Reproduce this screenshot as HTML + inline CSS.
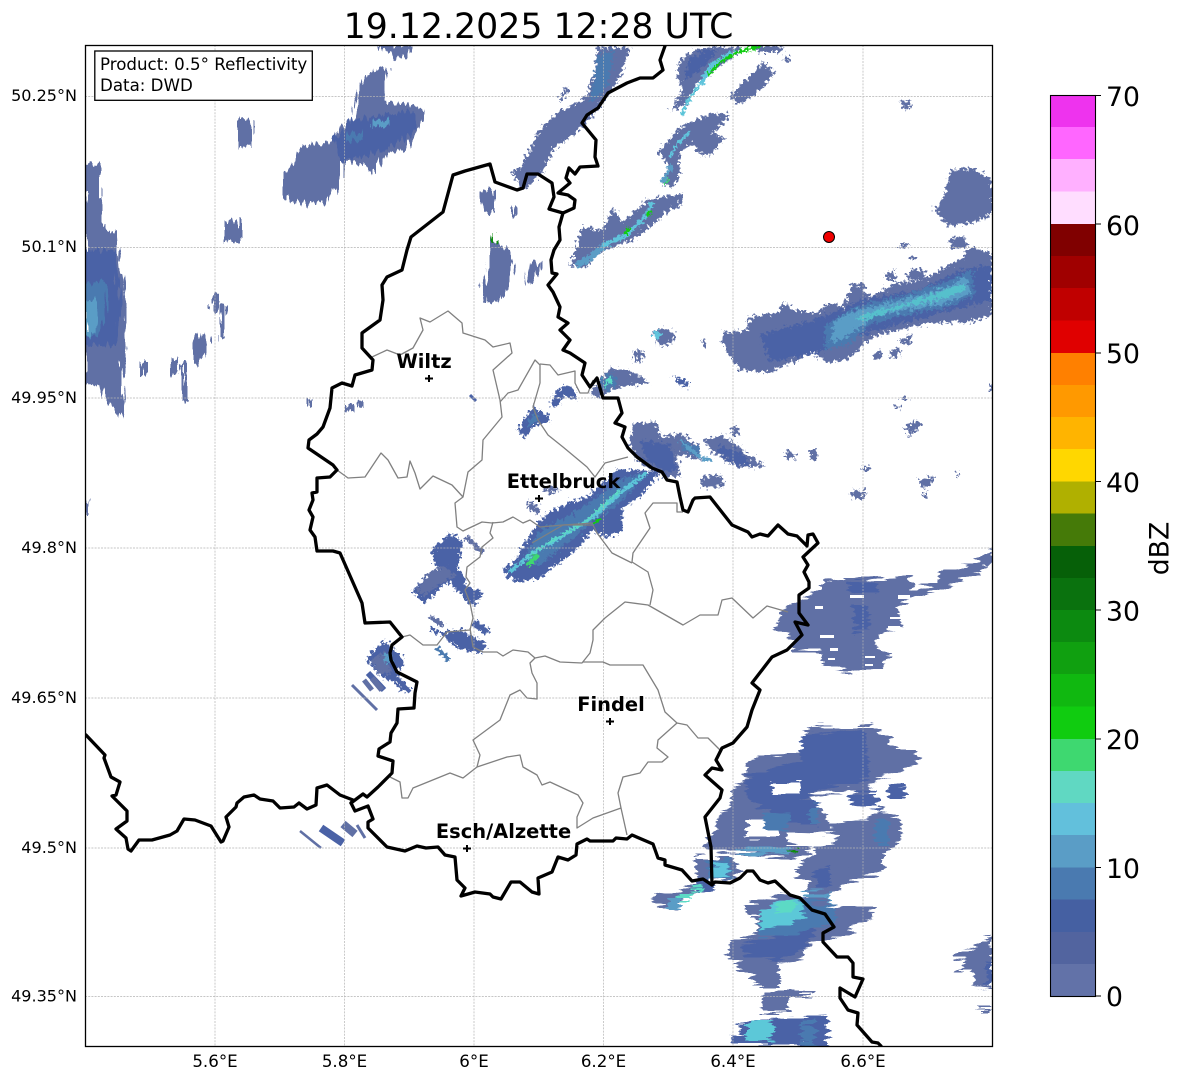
<!DOCTYPE html>
<html><head><meta charset="utf-8"><title>Radar</title>
<style>
html,body{margin:0;padding:0;background:#fff}
svg{display:block}
text{font-family:"DejaVu Sans","Liberation Sans",sans-serif;fill:#000}
.L{fill:#6070a5}.D{fill:#4a62a6}.M{fill:#4a7ab0}.S{fill:#5a9dc6}.C{fill:#60c4dc}.T{fill:#5cdac5}.G{fill:#3ed870}
.t{font-size:16.67px}.y{font-size:16.05px}.n{font-size:26.67px}.b{font-size:19.44px;font-weight:bold;text-anchor:middle}
.ls line,.ls polyline{fill:none;stroke-linecap:butt}
</style></head><body>
<svg width="1184" height="1081" viewBox="0 0 1184 1081">
<defs>
<clipPath id="ax"><rect x="85" y="45" width="907.5" height="1001"/></clipPath>
<filter id="f1" x="-5%" y="-5%" width="110%" height="110%" color-interpolation-filters="sRGB"><feTurbulence type="fractalNoise" baseFrequency="0.3" numOctaves="3" seed="4"/><feDisplacementMap in="SourceGraphic" scale="12" xChannelSelector="R" yChannelSelector="G"/></filter>
<filter id="f2" x="-5%" y="-5%" width="110%" height="110%" color-interpolation-filters="sRGB"><feTurbulence type="fractalNoise" baseFrequency="0.03 0.3" numOctaves="2" seed="7"/><feDisplacementMap in="SourceGraphic" scale="16" xChannelSelector="R" yChannelSelector="G"/></filter>
<filter id="f3" x="-5%" y="-5%" width="110%" height="110%" color-interpolation-filters="sRGB"><feTurbulence type="fractalNoise" baseFrequency="0.3 0.04" numOctaves="2" seed="3"/><feDisplacementMap in="SourceGraphic" scale="15" xChannelSelector="R" yChannelSelector="G"/></filter>
<filter id="f4" x="-5%" y="-5%" width="110%" height="110%" color-interpolation-filters="sRGB"><feTurbulence type="fractalNoise" baseFrequency="0.35" numOctaves="2" seed="9"/><feDisplacementMap in="SourceGraphic" scale="8" xChannelSelector="R" yChannelSelector="G"/></filter>
</defs>
<rect width="1184" height="1081" fill="#fff"/>

<g clip-path="url(#ax)">
<!-- vertical-streak radar (west) -->
<g filter="url(#f3)">
<polygon class="L" points="285,173 302,147 335,142 340,127 357,118 355,97 362,80 378,67 387,70 385,103 407,103 425,108 418,133 405,150 385,153 375,173 362,163 342,163 338,187 325,203 305,203 285,200"/>
<polygon class="D" points="335,140 352,120 412,110 418,130 385,150 342,163"/>
<rect class="M" x="347" y="132" width="15" height="8"/><rect class="S" x="372" y="120" width="18" height="7"/>
<polygon class="L" points="375,45 412,45 408,55 395,60 388,52"/>
<rect class="L" x="238" y="120" width="14" height="27"/><rect class="L" x="225" y="220" width="15" height="21"/>
<polygon class="L" points="85,165 100,165 100,200 103,205 103,230 118,230 120,260 125,300 127,345 122,365 125,400 123,420 110,405 100,385 85,388"/>
<polygon class="D" points="85,250 115,250 120,300 115,345 85,345"/>
<polygon class="M" points="85,285 105,280 108,312 98,335 85,335"/>
<polygon class="S" points="85,300 98,300 97,332 85,335"/>
<rect class="L" x="212" y="295" width="6" height="18"/><rect class="L" x="220" y="305" width="5" height="32"/>
<polygon class="L" points="192,343 205,330 210,345 200,365 194,365"/>
<rect class="L" x="172" y="358" width="7" height="16"/><rect class="L" x="182" y="365" width="6" height="36"/><rect class="L" x="142" y="362" width="6" height="13"/>
<rect class="L" x="85" y="500" width="5" height="12"/>
<rect class="L" x="307" y="399" width="4" height="9"/><rect class="L" x="347" y="405" width="6" height="8"/><rect class="L" x="358" y="401" width="5" height="8"/>
<polygon class="L" points="480,190 495,190 495,212 482,212"/><rect class="L" x="512" y="205" width="4" height="10"/>
<polygon class="L" points="492,240 510,250 514,262 510,280 505,295 497,302 486,302 482,285 490,268"/>
<rect fill="#108a10" x="494" y="232" width="2" height="12"/>
<polygon class="L" points="527,280 530,265 540,262 538,272 531,283"/>
</g>

<!-- rough radar (north-east and centre) -->
<g filter="url(#f1)">
<polygon class="L" points="597,47 630,47 620,77 610,93 587,123 570,137 553,150 543,173 523,190 512,173 523,165 537,133 557,113 587,97 595,70"/>
<polygon class="M" points="598,55 615,50 608,85 595,100 590,100"/>
<polygon class="L" points="558,100 566,87 569,90 561,102"/>
<polygon class="L" points="680,60 700,47 743,47 720,67 697,83 687,103 670,112 683,90 677,77"/>
<polygon class="D" points="688,60 705,50 718,50 700,70 685,80"/>
<polygon class="L" points="729,97 743,83 763,63 775,73 760,90 740,105"/>
<polygon class="L" points="753,46 785,46 782,52 757,52"/>
<polygon class="L" points="783,57 790,57 790,61 783,61"/>
<polygon class="L" points="658,152 680,127 710,113 730,115 713,133 725,138 710,157 697,152 693,143 680,153 680,173 673,188 662,185 670,167"/>
<polygon class="L" points="570,267 582,227 603,230 613,208 623,222 647,200 683,193 680,205 667,212 650,227 633,240 597,253 587,267"/>
<polygon class="L" points="950,170 972,168 992,180 992,215 965,225 948,225 935,212 945,195"/>
<polygon class="L" points="934,205 944,207 946,215 938,215"/>
<polygon class="L" points="950,238 965,236 967,248 952,249"/>
<polygon class="L" points="723,333 747,330 750,317 780,313 782,302 793,310 817,313 830,303 843,307 853,283 870,297 897,283 923,280 960,260 970,247 992,253 992,315 970,322 930,323 897,330 873,337 847,360 827,363 813,353 790,363 770,373 740,370 730,357 722,343"/>
<polygon class="D" points="760,335 820,318 860,300 920,290 960,270 992,265 992,300 920,318 860,335 820,352 770,362"/>
<polygon class="M" points="825,325 860,305 905,295 950,280 972,270 975,295 945,308 900,316 870,325 848,345 825,350"/>
<polygon class="S" points="835,320 857,310 900,300 947,287 967,277 970,293 947,303 907,310 873,317 847,337 830,343"/>
<polygon fill="#56c0cc" points="855,317 900,305 950,288 965,283 965,290 945,298 900,308 862,322"/>
<polygon class="L" points="652,333 662,327 675,333 672,342 660,347"/><polygon class="C" points="653,333 660,330 660,338 654,338"/>
<polygon class="L" points="901,102 911,100 910,110 903,108"/>
<polygon class="L" points="872,355 880,350 882,358 875,360"/><polygon class="L" points="890,350 900,348 898,358 890,356"/>
<polygon class="L" points="900,340 910,335 912,342 902,345"/><polygon class="L" points="855,290 862,282 866,288 858,296"/>
<polygon class="L" points="905,275 915,268 925,272 925,280 910,280"/><polygon class="L" points="885,275 895,270 895,280 885,280"/>
<polygon class="L" points="900,243 907,243 907,247 900,247"/><polygon class="L" points="910,255 915,255 915,260 910,260"/>
<polygon class="L" points="703,340 707,341 706,346 702,345"/>
<!-- centre -->
<polygon class="L" points="633,423 657,423 660,437 680,433 700,447 700,460 677,453 680,477 663,477 640,463 630,447"/>
<polygon class="D" points="640,440 670,445 678,470 665,472 645,458"/>
<polygon class="M" points="680,440 700,448 700,458 682,450"/>
<polygon class="L" points="703,440 723,435 760,463 767,467 737,467 713,452"/>
<polygon class="D" points="720,445 740,452 752,466 735,465 718,452"/>
<polygon class="L" points="600,380 610,368 633,372 650,383 620,387 607,393 597,398 590,393"/>
<polygon class="M" points="600,382 612,372 618,382 607,392"/>
<polygon class="T" points="606,378 612,376 610,386 605,386"/>
<polygon class="L" points="633,352 642,350 643,362 636,363"/>
<polygon class="D" points="672,375 680,378 690,384 688,389 680,385"/>
<polygon class="D" points="550,405 555,392 565,385 575,388 577,400 565,395 555,408"/>
<polygon class="D" points="517,430 533,407 550,417 550,422 535,425 525,438"/><polygon class="M" points="527,422 535,412 540,418 530,428"/>
<polygon class="D" points="503,567 513,563 533,530 547,513 567,503 587,497 617,470 643,470 660,473 640,497 623,507 622,530 607,538 593,530 573,553 553,567 543,577 520,582 507,577"/>
<polygon class="M" points="524,560 540,530 570,515 600,495 625,478 645,474 625,498 595,520 565,545 540,565"/>
<polygon class="L" points="527,503 533,502 541,510 537,514 529,510"/>
<polygon class="L" points="543,490 552,486 560,490 550,494"/>
<polygon class="D" points="433,548 450,533 463,542 457,567 465,578 467,587 485,593 472,607 460,593 447,582 425,603 412,592 425,578 440,570 433,560"/>
<polygon class="L" points="430,572 445,566 455,575 440,585 425,595 415,592"/>
<polygon class="D" points="438,632 463,630 487,645 482,653 457,648 447,640"/>
<polygon class="L" points="703,476 715,475 725,483 712,487 703,483"/>
<polygon class="D" points="366,658 385,640 400,655 405,664 396,672 410,690 405,692 393,682 380,677"/>
<polygon class="L" points="370,660 385,652 392,672 380,675"/>
<polygon class="S" points="384,655 390,652 392,662 385,662"/>
<polygon class="L" points="730,428 738,426 740,435 731,435"/>
<polygon class="L" points="783,452 790,450 797,460 788,458"/>
<polygon class="L" points="810,450 818,450 817,460 810,460"/>
<polygon class="L" points="850,492 860,490 867,490 862,499 855,499"/>
<polygon class="L" points="918,480 935,476 930,487 922,488"/>
<polygon class="L" points="922,493 928,493 928,497 922,497"/>
<polygon class="L" points="905,428 915,420 923,424 918,428 909,437"/>
<polygon class="L" points="702,476 722,476 724,486 702,488"/>
<polygon class="L" points="893,405 900,405 898,410"/><polygon class="L" points="901,398 908,398 908,401 901,401"/>
<polygon class="L" points="955,473 959,472 958,477"/><polygon class="L" points="990,383 993,383 993,390 990,390"/>
<polygon class="L" points="860,467 870,467 870,470 860,470"/>
</g>

<!-- roughened strokes: cores -->
<g class="ls" fill="none" filter="url(#f4)">
<polyline stroke="#5cc4d8" stroke-width="4" points="510,572 533,553 560,537 593,517 620,493 647,473"/>
<polyline stroke="#5cdac5" stroke-width="2" points="528,557 550,542 585,522 620,490"/>
<polyline stroke="#3ed870" stroke-width="5" points="528,565 538,555"/>
<polyline stroke="#10cc10" stroke-width="3" points="594,524 600,518"/>
<polyline stroke="#5a9dc6" stroke-width="3" points="680,440 700,458 712,460"/>
<polyline stroke="#60c4dc" stroke-width="3" points="670,158 675,147 690,132"/>
<polyline stroke="#5a9dc6" stroke-width="4" points="662,183 672,165"/>
<polyline stroke="#3ed870" stroke-width="2" points="664,185 668,178"/>
<polyline stroke="#60c4dc" stroke-width="4" points="600,247 627,235 647,215 652,202"/>
<polyline stroke="#5a9dc6" stroke-width="6" points="577,265 590,258 603,247"/>
<polyline stroke="#10cc10" stroke-width="3" points="625,235 630,228"/><polyline stroke="#10cc10" stroke-width="3" points="647,216 651,210"/>
<polyline stroke="#5cc4d8" stroke-width="3" points="682,115 688,100 700,85"/>
<polyline stroke="#60c4dc" stroke-width="5" points="700,85 712,65 735,52"/>
<polyline stroke="#10cc10" stroke-width="3" points="708,75 720,62 738,52 762,46"/>
<polyline stroke="#6070a5" stroke-width="5" points="466,537 483,553"/>
<polyline stroke="#6070a5" stroke-width="5" points="430,617 443,625"/>
<polyline stroke="#4a62a6" stroke-width="4" points="430,628 438,633"/>
<polyline stroke="#4a62a6" stroke-width="7" points="473,622 488,632"/>
<polyline stroke="#4a7ab0" stroke-width="4" points="437,648 449,660"/>
</g>
<g class="ls" fill="none">
<polyline stroke="#4a62a6" stroke-width="6" points="368,673 384,690"/>
<polyline stroke="#6070a5" stroke-width="6" points="372,678 382,690"/>
<polyline stroke="#6070a5" stroke-width="3" points="352,685 377,710"/>
<polyline stroke="#6070a5" stroke-width="5" points="364,680 372,690"/>
<polyline stroke="#4a62a6" stroke-width="4" points="396,678 410,692"/>
<polyline stroke="#6070a5" stroke-width="2.5" points="300,831 321,848"/>
<polyline stroke="#4a62a6" stroke-width="8" points="321,828 343,843"/>
<polyline stroke="#6070a5" stroke-width="8" points="343,824 355,834"/>
<polyline stroke="#6070a5" stroke-width="3" points="357,825 365,838"/>
<polyline stroke="#6070a5" stroke-width="6" points="985,565 992,558"/>
<polyline stroke="#4a62a6" stroke-width="3" points="470,395 476,401"/>
</g>

<!-- horizontal-stripe radar (south-east) -->
<g filter="url(#f2)">
<polygon class="L" points="823,580 863,578 893,577 907,575 913,590 937,583 940,572 970,565 992,550 992,562 967,577 950,587 917,598 897,607 903,627 883,633 873,647 893,653 880,668 847,673 823,663 820,652 793,650 793,637 775,628 783,613 800,600 823,590"/>
<polygon class="D" points="848,583 875,580 878,592 850,592"/>
<polygon class="D" points="852,605 868,605 870,630 855,632"/>
<polygon class="L" points="803,733 813,727 870,725 890,737 890,747 918,750 916,762 900,772 867,785 880,808 900,817 902,840 883,853 883,870 852,883 830,893 807,893 807,880 797,877 797,870 807,858 818,848 790,860 753,853 733,853 702,847 713,833 717,817 730,807 733,788 745,782 747,762 773,753 803,752"/>
<polygon class="D" points="803,735 865,730 870,780 820,790 800,800 760,810 745,790 750,775 800,760"/>
<polygon class="D" points="770,800 820,800 815,825 770,820"/>
<rect fill="#fff" x="772" y="781" width="28" height="14"/>
<polygon fill="#fff" points="810,795 848,790 865,800 880,808 865,820 830,825 820,805"/>
<rect fill="#fff" x="747" y="821" width="31" height="16"/>
<polygon fill="#fff" points="787,833 840,835 840,848 815,848 800,845 787,843"/>
<polygon class="D" points="848,795 878,793 878,807 850,806"/>
<polygon class="D" points="888,786 905,783 907,797 888,797"/>
<polygon class="M" points="810,805 818,805 818,823 810,823"/><polygon class="M" points="875,817 888,817 888,843 875,843"/>
<polygon class="M" points="763,812 790,815 790,830 765,830"/>
<polygon class="L" points="850,830 870,825 872,862 845,866 815,870 812,855"/>
<polygon class="D" points="815,870 830,865 830,888 815,888"/>
<polygon class="S" points="737,848 790,847 790,854 737,852"/>
<rect fill="#108a10" x="787" y="849" width="10" height="3"/>
<polygon class="S" points="803,893 830,892 830,907 812,905"/>
<polygon class="L" points="747,903 783,895 803,897 828,897 828,907 840,907 875,908 875,918 853,922 853,930 840,937 817,942 803,950 803,960 778,963 778,987 753,987 752,973 740,967 728,957 730,942 757,933 757,917 747,917"/>
<polygon class="D" points="742,945 800,930 815,930 805,948 778,960 745,955"/>
<polygon class="M" points="760,915 800,900 835,905 835,925 790,935 758,935"/>
<polygon fill="#5cc8d8" points="760,912 775,903 800,898 805,915 790,925 760,930"/>
<polygon class="T" points="772,906 795,900 795,910 777,912"/>
<polygon class="L" points="763,992 815,992 815,997 790,997 790,1012 762,1012"/>
<polygon class="D" points="730,1045 733,1032 745,1022 775,1018 828,1016 828,1045"/>
<rect fill="#fff" x="732" y="1020" width="12" height="4"/><rect fill="#fff" x="733" y="1029" width="12" height="4"/>
<polygon fill="#5cc8d8" points="747,1022 773,1021 773,1040 747,1040"/>
<rect class="M" x="801" y="1022" width="14" height="22"/>
<polygon class="L" points="954,953 975,947 992,935 992,988 975,985 972,970 958,970 966,960 954,958"/>
<rect class="D" x="986" y="960" width="6" height="24"/>
<rect class="L" x="978" y="1007" width="14" height="3"/>
<polygon class="L" points="652,898 680,890 700,880 705,888 680,900 675,910 655,905"/>
<polygon class="D" points="695,882 710,875 713,890 698,893"/>
<polygon class="L" points="695,857 732,857 740,870 730,882 700,880 695,870"/>
<polygon class="M" points="708,860 730,858 731,880 708,880"/>
<polygon class="C" points="712,865 728,864 728,876 710,878"/>
<rect class="S" x="668" y="898" width="11" height="11"/><rect class="T" x="678" y="894" width="12" height="5"/><rect class="T" x="692" y="885" width="11" height="6"/>
</g>
<g>
<rect fill="#fff" x="850" y="595" width="14" height="3"/><rect fill="#fff" x="898" y="595" width="12" height="4"/><rect fill="#fff" x="815" y="606" width="8" height="3"/>
<rect fill="#fff" x="890" y="617" width="14" height="2"/><rect fill="#fff" x="888" y="626" width="12" height="2"/>
<rect fill="#fff" x="820" y="635" width="14" height="3"/><rect fill="#fff" x="830" y="648" width="8" height="3"/><rect fill="#fff" x="828" y="658" width="7" height="2"/>
<rect fill="#fff" x="865" y="656" width="10" height="2"/><rect fill="#fff" x="865" y="664" width="8" height="2"/>
</g>

<!-- gridlines -->
<g stroke="#b4b4b4" stroke-width="0.7" stroke-dasharray="2 1.2" fill="none">
<path d="M215 45V1046M344.500 45V1046M474 45V1046M603.500 45V1046M733 45V1046M863 45V1046"/>
<path d="M85 96.500H992M85 247.500H992M85 398H992M85 548H992M85 698H992M85 848H992M85 996.500H992"/>
</g>

<!-- canton lines -->
<g fill="none" stroke="#808080" stroke-width="1.3" stroke-linejoin="round">
<polyline points="372,357 387,350 400,355 413,348 423,330 420,318 430,322 448,311 462,323 463,333 485,340 493,347 510,343 512,353 493,370 500,400 502,417 483,440 482,460 468,472 463,497 455,503 457,527 463,531 482,522 492,523 503,522 513,517 523,523 530,520 540,527 563,525 593,523"/>
<polyline points="337,470 348,478 365,477 381,453 388,460 398,478 407,477 410,461 415,473 420,489 433,476 452,485 463,497"/>
<polyline points="500,402 508,393 518,390 535,360 540,365 540,383 533,407 538,420 548,435 563,447 575,457 587,467 595,477 605,463 628,457"/>
<polyline points="540,364 550,365 558,375 575,371 575,383 580,393 588,393 593,380"/>
<polyline points="493,522 490,533 493,538 482,547 480,557 467,567 466,577 470,583 465,590 470,603 473,618 470,630 447,632 437,645 423,645 410,635 402,637"/>
<polyline points="470,628 473,647 483,652 497,652 503,656 513,650 528,652 535,658 545,656 560,662 582,663 590,653 593,640 593,630 605,618 625,602 648,605 683,625 700,615 718,615 722,600 732,598 753,618 767,606 788,612"/>
<polyline points="650,605 653,590 648,572 632,562 633,553 650,528 645,513 653,503 677,503 677,512 683,512"/>
<polyline points="532,543 563,525 593,525 597,533 612,553 632,563"/>
<polyline points="583,662 603,662 610,665 643,665 658,690 665,712 677,723 687,725 698,738 708,738 720,750"/>
<polyline points="677,723 658,740 657,748 668,757 662,762 648,762 640,773 623,777 618,793 621,808 627,835"/>
<polyline points="621,808 593,818 577,828 577,817 583,803 578,795 550,782 542,785 537,775 523,767 520,755 507,757 477,767 463,778 450,773 413,788 408,798 402,798 400,782 390,777"/>
<polyline points="477,767 480,755 473,740 500,720 510,695 520,690 527,698 537,699 537,683 532,673 530,663 535,658"/>
</g>

<!-- national borders -->
<g fill="none" stroke="#000" stroke-width="3.300" stroke-linejoin="round" stroke-linecap="round">
<polyline points="86,735 105,755 104,758 111,777 120,782 116,795 112,796 127,811 127,821 116,829 126,838 128,849 131,851 139,840 152,840 170,835 177,831 184,819 195,820 211,826 221,842 223,841 229,827 226,817 236,807 237,803 244,797 254,795 260,799 273,801 280,808 294,807 299,803 307,809 316,805 317,788 327,785 340,795 353,800 351,803 363,794 367,797 378,787 392,773 393,761 378,756 379,749 390,742 391,733 397,723 398,709 414,708 415,693 417,682 397,672 391,660 390,653 392,645 402,637 390,622 365,623 362,603 340,553 333,551 317,551 315,537 310,530 313,517 309,510 313,500 312,493 317,492 317,478 330,477 337,470 333,465 308,448 309,440 317,434 323,427 330,408 332,388 342,383 352,386 355,375 372,370 373,360 362,348 362,333 380,320 383,300 382,285 387,277 402,270 407,250 411,237 443,212 453,175 465,171 490,164 495,182 517,190 523,188 527,174 538,174 552,183 554,197 549,209 563,213 574,208 575,200 568,195 558,193 570,183 566,178 569,168 575,174 580,167 598,166 595,157 596,140 582,123 587,115 598,108 608,93 627,83 640,78 653,78 663,70 660,60 665,46"/>
<polyline points="563,213 559,227 560,240 554,250 551,260 552,273 557,274 548,285 553,292 560,307 558,317 568,323 560,330 570,340 563,350 570,353 585,363 582,375 590,387 597,378 603,398 618,398 622,413 615,423 625,427 622,437 628,448 637,457 652,468 662,472 667,480 677,482 680,497 683,510 688,512 693,500 695,498 710,497 732,525 748,532 752,537 760,534 768,536 778,525 788,534 797,536 807,546 808,535 813,534 818,543 803,557 808,565 804,572 809,582 809,588 799,595 799,613 808,625 795,622 802,635 787,650 772,657 752,683 760,690 752,710 747,727 733,743 722,748 716,760 722,770 712,768 705,775 722,790 720,798 705,817 711,847 712,885"/>
<polyline points="351,803 355,811 368,806 373,819 368,822 368,828 387,847 405,851 417,846 426,848 438,847 445,855 455,857 457,880 465,888 461,896 475,892 490,894 493,897 501,899 511,882 520,882 532,892 539,894 538,878 552,872 558,857 568,860 576,855 577,844 587,839 590,841 613,841 616,838 627,839 632,835 653,844 658,858 665,860 665,865 682,870 692,881 703,879 712,885 715,882 730,883 740,878 747,871 753,871 760,880 768,883 775,881 790,895 800,898 812,910 825,914 834,927 823,933 823,942 837,957 848,957 853,963 853,977 863,979 855,997 840,988 840,998 848,1010 858,1013 857,1025 872,1042 878,1043 881,1046"/>
</g>

<!-- markers -->
<circle cx="829" cy="237" r="5.500" fill="#f00000" stroke="#000" stroke-width="1"/>
<g stroke="#000" stroke-width="2" fill="none">
<path d="M425 378.500H433M429 375V382M535 498.500H543M539 495V502M606 721.500H614M610 718V725M463 848.500H471M467 845V852"/>
</g>
</g>

<!-- labels -->
<text class="b" x="424" y="368">Wiltz</text>
<text class="b" x="563.500" y="488">Ettelbruck</text>
<text class="b" x="611" y="711">Findel</text>
<text class="b" x="503.500" y="838">Esch/Alzette</text>

<!-- frame -->
<rect x="85.500" y="45.500" width="907" height="1001" fill="none" stroke="#000" stroke-width="1.300"/>

<!-- legend -->
<rect x="94.800" y="51" width="217.500" height="49.300" fill="#fff" stroke="#000" stroke-width="1.300"/>
<text class="t" x="100" y="70">Product: 0.5° Reflectivity</text>
<text class="t" x="100" y="91">Data: DWD</text>

<!-- title -->
<text x="538.500" y="38" font-size="34.720" text-anchor="middle">19.12.2025 12:28 UTC</text>

<!-- axis labels -->
<g class="y" text-anchor="end">
<text x="77" y="101">50.25°N</text><text x="77" y="252">50.1°N</text><text x="77" y="403">49.95°N</text>
<text x="77" y="553">49.8°N</text><text x="77" y="703">49.65°N</text><text x="77" y="853">49.5°N</text><text x="77" y="1001.500">49.35°N</text>
</g>
<g class="t" text-anchor="middle">
<text x="215" y="1067">5.6°E</text><text x="344.500" y="1067">5.8°E</text><text x="474" y="1067">6°E</text>
<text x="603.500" y="1067">6.2°E</text><text x="733" y="1067">6.4°E</text><text x="863" y="1067">6.6°E</text>
</g>

<!-- colorbar -->
<g shape-rendering="crispEdges">
<rect x="1050" y="95" width="46" height="32.500" fill="#ee33ee"/>
<rect x="1050" y="127" width="46" height="32.500" fill="#ff66ff"/>
<rect x="1050" y="159" width="46" height="33" fill="#ffb0ff"/>
<rect x="1050" y="191.500" width="46" height="33" fill="#ffddff"/>
<rect x="1050" y="224" width="46" height="32.500" fill="#800000"/>
<rect x="1050" y="256" width="46" height="32.500" fill="#a00000"/>
<rect x="1050" y="288" width="46" height="33" fill="#c00000"/>
<rect x="1050" y="320.500" width="46" height="33" fill="#e00000"/>
<rect x="1050" y="353" width="46" height="32.500" fill="#ff8000"/>
<rect x="1050" y="385" width="46" height="32.500" fill="#ff9900"/>
<rect x="1050" y="417" width="46" height="32.500" fill="#ffb400"/>
<rect x="1050" y="449" width="46" height="33" fill="#ffd700"/>
<rect x="1050" y="481.500" width="46" height="32.500" fill="#b0b000"/>
<rect x="1050" y="513.500" width="46" height="33" fill="#457a08"/>
<rect x="1050" y="546" width="46" height="32.500" fill="#066008"/>
<rect x="1050" y="578" width="46" height="32.500" fill="#0a720e"/>
<rect x="1050" y="610" width="46" height="32.500" fill="#0c8a10"/>
<rect x="1050" y="642" width="46" height="32.500" fill="#10a010"/>
<rect x="1050" y="674" width="46" height="33" fill="#10b810"/>
<rect x="1050" y="706.500" width="46" height="33" fill="#10cc10"/>
<rect x="1050" y="739" width="46" height="32.500" fill="#3ed870"/>
<rect x="1050" y="771" width="46" height="32.500" fill="#60d8c2"/>
<rect x="1050" y="803" width="46" height="32.500" fill="#62c0dc"/>
<rect x="1050" y="835" width="46" height="33" fill="#5a9dc6"/>
<rect x="1050" y="867.500" width="46" height="32.500" fill="#4a7ab0"/>
<rect x="1050" y="899.500" width="46" height="33" fill="#4560a2"/>
<rect x="1050" y="932" width="46" height="32.500" fill="#52649f"/>
<rect x="1050" y="964" width="46" height="32.500" fill="#6272a8"/>
</g>
<rect x="1050.500" y="95.500" width="45" height="901" fill="none" stroke="#000" stroke-width="1.100"/>
<path d="M1096 95.500H1101M1096 224H1101M1096 353H1101M1096 481.500H1101M1096 610H1101M1096 739H1101M1096 867.500H1101M1096 996H1101" stroke="#000" stroke-width="1.100" fill="none"/>
<g class="n">
<text x="1106" y="106">70</text><text x="1106" y="235">60</text><text x="1106" y="363">50</text><text x="1106" y="492">40</text>
<text x="1106" y="620.500">30</text><text x="1106" y="749">20</text><text x="1106" y="878">10</text><text x="1106" y="1006">0</text>
</g>
<text class="n" transform="translate(1168.500 548.500) rotate(-90)" text-anchor="middle">dBZ</text>
</svg>
</body></html>
